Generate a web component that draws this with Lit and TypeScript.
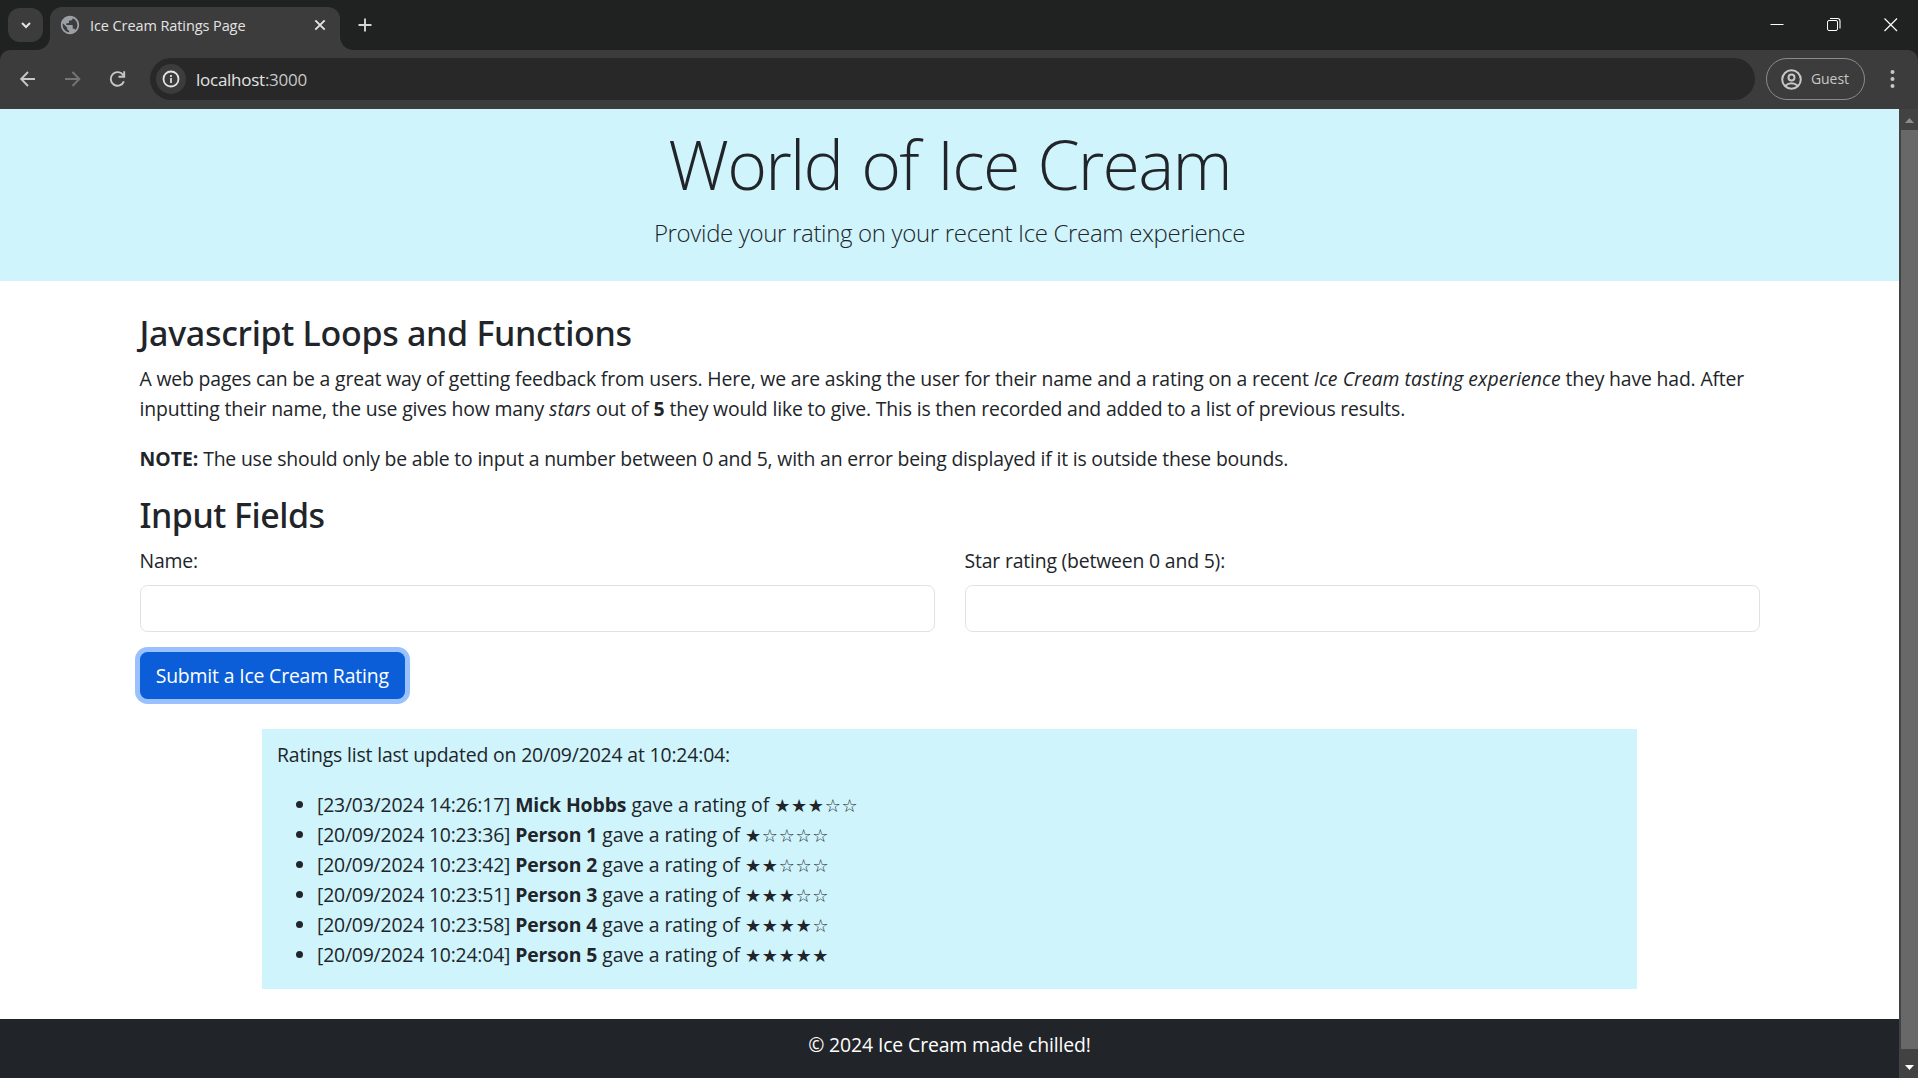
import { LitElement, html, css, svg } from "lit";
import { customElement, state } from "lit/decorators.js";

interface Rating {
  when: string;
  name: string;
  stars: number;
}

@customElement("browser-chrome")
class BrowserChrome extends LitElement {
  static styles = css`
    :host {
      display: block;
      height: 109px;
      flex: none;
      background: #1f2221;
      font-family: "Open Sans", "Noto Sans", sans-serif;
      color: #e3e3e3;
    }
    svg { display: block; overflow: visible; flex: none; }
    .strip { display: flex; height: 50px; align-items: flex-end; }
    .search {
      width: 35px; height: 34px; margin: 0 7px 8px 8px; border-radius: 12px;
      background: #3c3c3c; display: grid; place-items: center;
    }
    .tab {
      position: relative; box-sizing: border-box; width: 290px; height: 43px;
      padding: 0 14px 7px 9px; background: #3c3c3c; border-radius: 12px 12px 0 0;
      display: flex; align-items: center;
    }
    .tab::before, .tab::after {
      content: ""; position: absolute; bottom: 0; width: 13px; height: 13px;
    }
    .tab::before { right: 100%; background: radial-gradient(circle at 0 0, transparent 12.5px, #3c3c3c 13.2px); }
    .tab::after { left: 100%; background: radial-gradient(circle at 100% 0, transparent 12.5px, #3c3c3c 13.2px); }
    .title { font-size: 14.5px; line-height: 20px; letter-spacing: -0.09px; padding-top: 2px; margin-left: 9px; flex: 1; white-space: nowrap; }
    .plus { margin: 0 0 18px 18px; }
    .controls { margin: 0 20px 18px auto; display: flex; gap: 43px; }
    .toolbar {
      display: flex; align-items: center; height: 59px; box-sizing: border-box;
      background: #3c3c3c; border-radius: 10px 10px 0 0; padding: 0 23px 1px 19px;
    }
    .nav { display: flex; gap: 27px; margin-right: 23px; }
    .address {
      flex: 1; height: 42px; border-radius: 21px; background: #282828;
      display: flex; align-items: center; box-sizing: border-box; padding-left: 6px;
    }
    .info { width: 30px; height: 30px; border-radius: 50%; background: #3c3c3c; display: grid; place-items: center; }
    .url { font-size: 17px; line-height: 24px; letter-spacing: -0.26px; margin-left: 10px; padding-top: 1px; }
    .port { color: #c7c7c7; }
    .guest {
      box-sizing: border-box; width: 99px; height: 42px; border: 1px solid #8b8b8b; border-radius: 21px;
      margin: 0 25px 0 11px; padding-left: 14px; display: flex; align-items: center; gap: 9px;
      color: #c7c7c7; font-size: 14px; letter-spacing: -0.07px;
    }
  `;

  render() {
    return html`
      <div class="strip">
        <div class="search">
          <svg width="10" height="7" viewBox="0 0 10 7"><path d="M1 1l4 4 4-4" fill="none" stroke="#e3e3e3" stroke-width="2"/></svg>
        </div>
        <div class="tab">
          <svg width="22" height="22" viewBox="0 0 24 24"><path fill="#9aa0a6" d="M12 2C6.48 2 2 6.48 2 12s4.48 10 10 10 10-4.48 10-10S17.52 2 12 2zm-1 17.93c-3.95-.49-7-3.85-7-7.93 0-.62.08-1.21.21-1.79L9 15v1c0 1.1.9 2 2 2v1.93zm6.900-2.540c-.26-.81-1-1.390-1.900-1.390h-1v-3c0-.55-.45-1-1-1H8v-2h2c.55 0 1-.45 1-1V7h2c1.100 0 2-.9 2-2v-.41c2.930 1.190 5 4.060 5 7.410 0 2.080-.8 3.970-2.100 5.390z"/></svg>
          <span class="title">Ice Cream Ratings Page</span>
          <svg width="12" height="12" viewBox="0 0 12 12"><path d="M1.3 1.3l9.4 9.4M10.7 1.3l-9.4 9.4" stroke="#e3e3e3" stroke-width="1.9"/></svg>
        </div>
        <svg class="plus" width="14" height="14" viewBox="0 0 14 14"><path d="M7 .5v13M.5 7h13" stroke="#d5d5d5" stroke-width="1.9"/></svg>
        <div class="controls">
          <svg width="14" height="14" viewBox="0 0 14 14"><path d="M.5 6.5h13" stroke="#fff"/></svg>
          <svg width="14" height="14" viewBox="0 0 14 14" fill="none" stroke="#fff"><rect x=".5" y="2.5" width="10" height="10" rx="1.5"/><path d="M3 .5h7.5q2.5 0 2.5 2.5v7.5" stroke-width="1.1"/></svg>
          <svg width="14" height="14" viewBox="0 0 14 14"><path d="M.5.5l12.5 12.5M13 .5L.5 13" stroke="#fff" stroke-width="1.2"/></svg>
        </div>
      </div>
      <div class="toolbar">
        <div class="nav">
          <svg width="18" height="18" viewBox="0 0 18 18" fill="none" stroke="#c7c7c7" stroke-width="1.9"><path d="M16 9H2.2M9 2L2.2 9 9 16"/></svg>
          <svg width="18" height="18" viewBox="0 0 18 18" fill="none" stroke="#757575" stroke-width="1.9"><path d="M1 9h13.8M8.500 2l6.8 7-6.8 7"/></svg>
          <svg width="18" height="18" viewBox="0 0 18 18" fill="none" stroke="#c7c7c7" stroke-width="1.9"><path d="M14.900 11.300A6.800 6.800 0 1 1 14.300 5.300M15.200 1.200V6.800H9.500"/></svg>
        </div>
        <div class="address">
          <span class="info">
            <svg width="18" height="18" viewBox="0 0 18 18"><circle cx="9" cy="9" r="7.500" fill="none" stroke="#e3e3e3" stroke-width="1.8"/><path d="M9 8v5M9 5v1.900" stroke="#e3e3e3" stroke-width="1.7"/></svg>
          </span>
          <span class="url">localhost<span class="port">:3000</span></span>
        </div>
        <div class="guest">
          <svg width="21" height="21" viewBox="0 0 21 21" fill="none" stroke="#c7c7c7" stroke-width="2"><circle cx="10.500" cy="10.500" r="9.300"/><circle cx="10.500" cy="8.500" r="3"/><path d="M4 17q6.500-5.500 13 0"/></svg>
          <span>Guest</span>
        </div>
        <svg width="5" height="20" viewBox="0 0 5 20" fill="#c7c7c7">${[3, 10, 17].map((y) => svg`<circle cx="2.500" cy=${y} r="2"/>`)}</svg>
      </div>
    `;
  }
}

@customElement("app-root")
class AppRoot extends LitElement {
  static styles = css`
    :host {
      display: flex; flex-direction: column; width: 1918px; height: 1078px; overflow: hidden;
      font-family: "Open Sans", "Noto Sans", sans-serif; font-size: 19.4px; line-height: 30px;
      letter-spacing: -0.18px; color: #212529; background: #fff;
    }
    .body { display: flex; flex: 1; min-height: 0; }
    .view { flex: 1; overflow: hidden; }
    h1, h2, p, ul { margin: 0; }
    strong { font-weight: 700; letter-spacing: 0; }
    em { letter-spacing: 0.06px; }
    .hero { box-sizing: border-box; height: 172px; background: #cff4fc; text-align: center; padding-top: 13px; }
    .hero h1 { font-size: 68px; line-height: 84px; font-weight: 300; letter-spacing: -1.75px; word-spacing: 3px; }
    .lead { font-size: 24px; line-height: 37.500px; font-weight: 300; letter-spacing: -0.33px; margin-top: 8px; }
    .container { width: 1620px; margin: 0 auto; padding-top: 31px; }
    h2 { font-family: "Noto Sans", "Open Sans", sans-serif; font-size: 34px; line-height: 42px; font-weight: 500; letter-spacing: -0.5px; margin-bottom: 10px; }
    .topic { letter-spacing: -0.3px; }
    .text { margin-bottom: 20px; white-space: nowrap; letter-spacing: -0.165px; }
    .note { letter-spacing: -0.19px; }
    .fields { display: grid; grid-template-columns: 1fr 1fr; gap: 30px; margin-bottom: 20px; }
    label { display: block; margin-bottom: 9px; }
    input {
      display: block; box-sizing: border-box; width: 100%; height: 47px; margin: 0; padding: 7px 15px;
      border: 1px solid #dee2e6; border-radius: 7.500px; background: #fff; outline: none; font: inherit;
    }
    button {
      display: block; width: 265.500px; height: 47px; padding: 1px 0 0; border: 0; border-radius: 7.500px;
      background: #0b5ed7; color: #fff; box-shadow: 0 0 0 5px rgb(49 132 253 / 0.5);
      font: inherit; letter-spacing: -0.17px;
    }
    .ratings { box-sizing: border-box; width: 1375px; height: 260px; margin: 30px auto 0; padding: 11px 15px 0; background: #cff4fc; letter-spacing: -0.16px; }
    ul { padding-left: 40px; margin-top: 20px; }
    li { white-space: nowrap; letter-spacing: -0.07px; }
    li strong { letter-spacing: -0.1px; }
    .when { letter-spacing: -0.2px; }
    .stars { font-family: "DejaVu Sans", sans-serif; font-size: 18px; line-height: 1; letter-spacing: 0.700px; }
    footer { margin-top: 30px; height: 59px; box-sizing: border-box; padding-top: 11px; background: #212529; color: #fff; text-align: center; letter-spacing: -0.12px; }
    .scrollbar { width: 19px; box-sizing: border-box; background: #424242; display: flex; flex-direction: column; align-items: flex-end; }
    .scrollbar svg { display: block; flex: none; }
    .thumb { width: 17px; flex: 1; background: #686868; }
  `;

  @state() private lastUpdated = "20/09/2024 at 10:24:04";

  @state() private ratings: Rating[] = [
    { when: "23/03/2024 14:26:17", name: "Mick Hobbs", stars: 3 },
    { when: "20/09/2024 10:23:36", name: "Person 1", stars: 1 },
    { when: "20/09/2024 10:23:42", name: "Person 2", stars: 2 },
    { when: "20/09/2024 10:23:51", name: "Person 3", stars: 3 },
    { when: "20/09/2024 10:23:58", name: "Person 4", stars: 4 },
    { when: "20/09/2024 10:24:04", name: "Person 5", stars: 5 },
  ];

  render() {
    return html`
      <browser-chrome></browser-chrome>
      <div class="body">
        <div class="view">
          <header class="hero">
            <h1>World of Ice Cream</h1>
            <p class="lead">Provide your rating on your recent Ice Cream experience</p>
          </header>
          <main class="container">
            <h2 class="topic">Javascript Loops and Functions</h2>
            <p class="text">A web pages can be a great way of getting feedback from users. Here, we are asking the user for their name and a rating on a recent <em>Ice Cream tasting experience</em> they have had. After<br>inputting their name, the use gives how many <em>stars</em> out of <strong>5</strong> they would like to give. This is then recorded and added to a list of previous results.</p>
            <p class="text note"><strong>NOTE:</strong> The use should only be able to input a number between 0 and 5, with an error being displayed if it is outside these bounds.</p>
            <h2>Input Fields</h2>
            <div class="fields">
              <div><label for="name">Name:</label><input id="name" type="text"></div>
              <div><label for="stars">Star rating (between 0 and 5):</label><input id="stars" type="text"></div>
            </div>
            <button type="button">Submit a Ice Cream Rating</button>
          </main>
          <section class="ratings">
            <p>Ratings list last updated on ${this.lastUpdated}:</p>
            <ul>
              ${this.ratings.map((r) => html`<li><span class="when">[${r.when}]</span> <strong>${r.name}</strong> gave a rating of <span class="stars">${"★".repeat(r.stars)}${"☆".repeat(5 - r.stars)}</span></li>`)}
            </ul>
          </section>
          <footer>© 2024 Ice Cream made chilled!</footer>
        </div>
        <div class="scrollbar">
          <svg width="17" height="21" viewBox="0 0 17 21"><path d="M4 14h9L8.500 9z" fill="#8c8c8c"/></svg>
          <div class="thumb"></div>
          <svg width="17" height="29" viewBox="0 0 17 29"><path d="M4 16h9l-4.500 5z" fill="#fff"/></svg>
        </div>
      </div>
    `;
  }
}
